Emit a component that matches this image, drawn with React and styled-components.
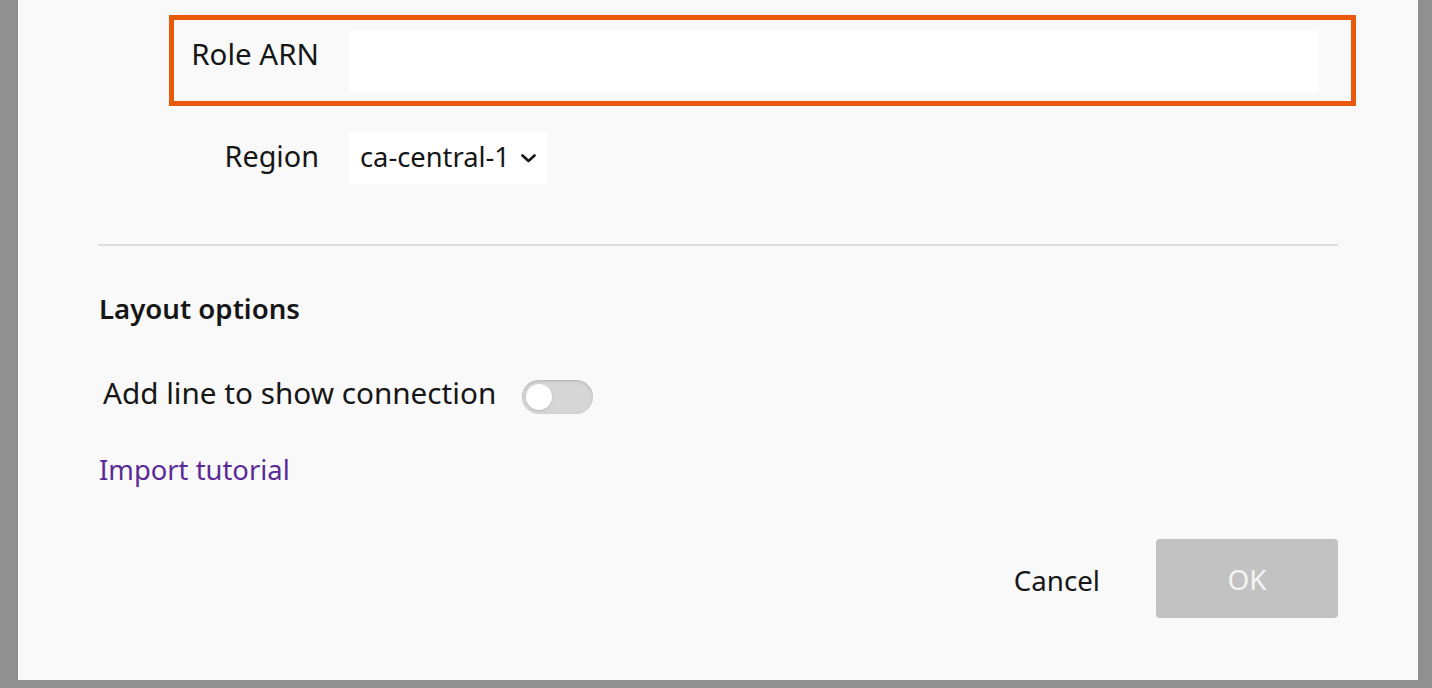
import styled, { createGlobalStyle } from 'styled-components'

const GlobalStyle = createGlobalStyle`
    html, body {
        margin: 0;
        padding: 0;
        background: #909090;
        font-family: "Noto Sans", "Open Sans", sans-serif;
        color: #161616;
    }
    * {
        box-sizing: border-box;
    }
`

function Chevron() {
    return (
        <svg width="15" height="9" viewBox="0 0 15 9" fill="none">
            <path d="M1.5 1.5L7.5 7L13.5 1.5" stroke="#161616" strokeWidth="2.6" strokeLinecap="round" strokeLinejoin="round" />
        </svg>
    )
}

export default function App() {
    return (
        <>
            <GlobalStyle />
            <S.Page>
                <S.Dialog>
                    <S.Form>
                        <S.Field highlighted>
                            <S.Label size={29.5}>Role ARN</S.Label>
                            <S.TextInput type="text" />
                        </S.Field>
                        <S.Field>
                            <S.Label size={28.8}>Region</S.Label>
                            <S.Select>
                                <span>ca-central-1</span>
                                <Chevron />
                            </S.Select>
                        </S.Field>
                    </S.Form>

                    <S.Divider />

                    <S.SectionTitle>Layout options</S.SectionTitle>

                    <S.ToggleRow>
                        <S.ToggleLabel>Add line to show connection</S.ToggleLabel>
                        <S.Toggle>
                            <S.Knob />
                        </S.Toggle>
                    </S.ToggleRow>

                    <S.Link href="#">Import tutorial</S.Link>

                    <S.Footer>
                        <S.CancelButton>Cancel</S.CancelButton>
                        <S.OkButton disabled>OK</S.OkButton>
                    </S.Footer>
                </S.Dialog>
            </S.Page>
        </>
    )
}

const S = {
    Page: styled.div`
        width: 1432px;
        height: 688px;
        padding: 0 14px 8px 18px;
        overflow: hidden;
    `,

    Dialog: styled.div`
        height: 680px;
        background: #f9f9f9;
        padding: 15px 80px 0 80px;
        display: flex;
        flex-direction: column;
    `,

    Form: styled.div`
        margin: 0 -18px 0 71px;
        display: flex;
        flex-direction: column;
        gap: 11px;
    `,

    Field: styled.div`
        display: grid;
        grid-template-columns: 145px 1fr;
        column-gap: 30px;
        align-items: start;
        padding: 10px 32px 9px 0;
        border: 5px solid ${props => props.highlighted ? '#e8590c' : 'transparent'};
    `,

    Label: styled.label`
        font-size: ${props => props.size}px;
        line-height: 38px;
        padding-top: 5px;
        text-align: right;
        white-space: nowrap;
    `,

    TextInput: styled.input`
        height: 62px;
        width: 100%;
        border: none;
        border-radius: 4px;
        background: #ffffff;
        outline: none;
        font-family: inherit;
        font-size: 28px;
    `,

    Select: styled.div`
        width: 198px;
        height: 52px;
        background: #ffffff;
        display: flex;
        align-items: center;
        justify-content: space-between;
        padding: 0 11px 3px 11px;
        font-size: 27.3px;
        line-height: 38px;

        svg {
            margin-top: 4px;
        }
    `,

    Divider: styled.div`
        height: 2px;
        background: #dedede;
        margin-top: 46px;
    `,

    SectionTitle: styled.h2`
        font-size: 27.6px;
        line-height: 38px;
        font-weight: 600;
        margin: 43px 0 0 1px;
    `,

    ToggleRow: styled.div`
        display: flex;
        align-items: flex-start;
        gap: 26px;
        margin-top: 47px;
        padding-left: 5px;
    `,

    ToggleLabel: styled.span`
        font-size: 29.7px;
        line-height: 38px;
    `,

    Toggle: styled.div`
        width: 71px;
        height: 34px;
        margin-top: 6px;
        border-radius: 17px;
        background: #d6d6d6;
        box-shadow: inset 0 1px 3px rgba(0, 0, 0, 0.18);
        display: flex;
        align-items: center;
        padding-left: 4px;
    `,

    Knob: styled.div`
        width: 26px;
        height: 26px;
        border-radius: 50%;
        background: #ffffff;
        box-shadow: 0 1px 2px rgba(0, 0, 0, 0.15);
    `,

    Link: styled.a`
        align-self: flex-start;
        margin: 37px 0 0 1px;
        font-size: 27.4px;
        line-height: 38px;
        color: #5b2a96;
        text-decoration: none;
    `,

    Footer: styled.div`
        display: flex;
        justify-content: flex-end;
        align-items: center;
        gap: 56px;
        margin-top: 50px;
    `,

    CancelButton: styled.button`
        background: none;
        border: none;
        padding: 3px 0 0 0;
        font-family: inherit;
        font-size: 27.7px;
        line-height: 38px;
        color: #161616;
        cursor: pointer;
    `,

    OkButton: styled.button`
        width: 182px;
        height: 79px;
        border: none;
        border-radius: 4px;
        background: #c2c2c2;
        color: #f4f4f4;
        font-family: inherit;
        font-size: 28px;
    `
}
